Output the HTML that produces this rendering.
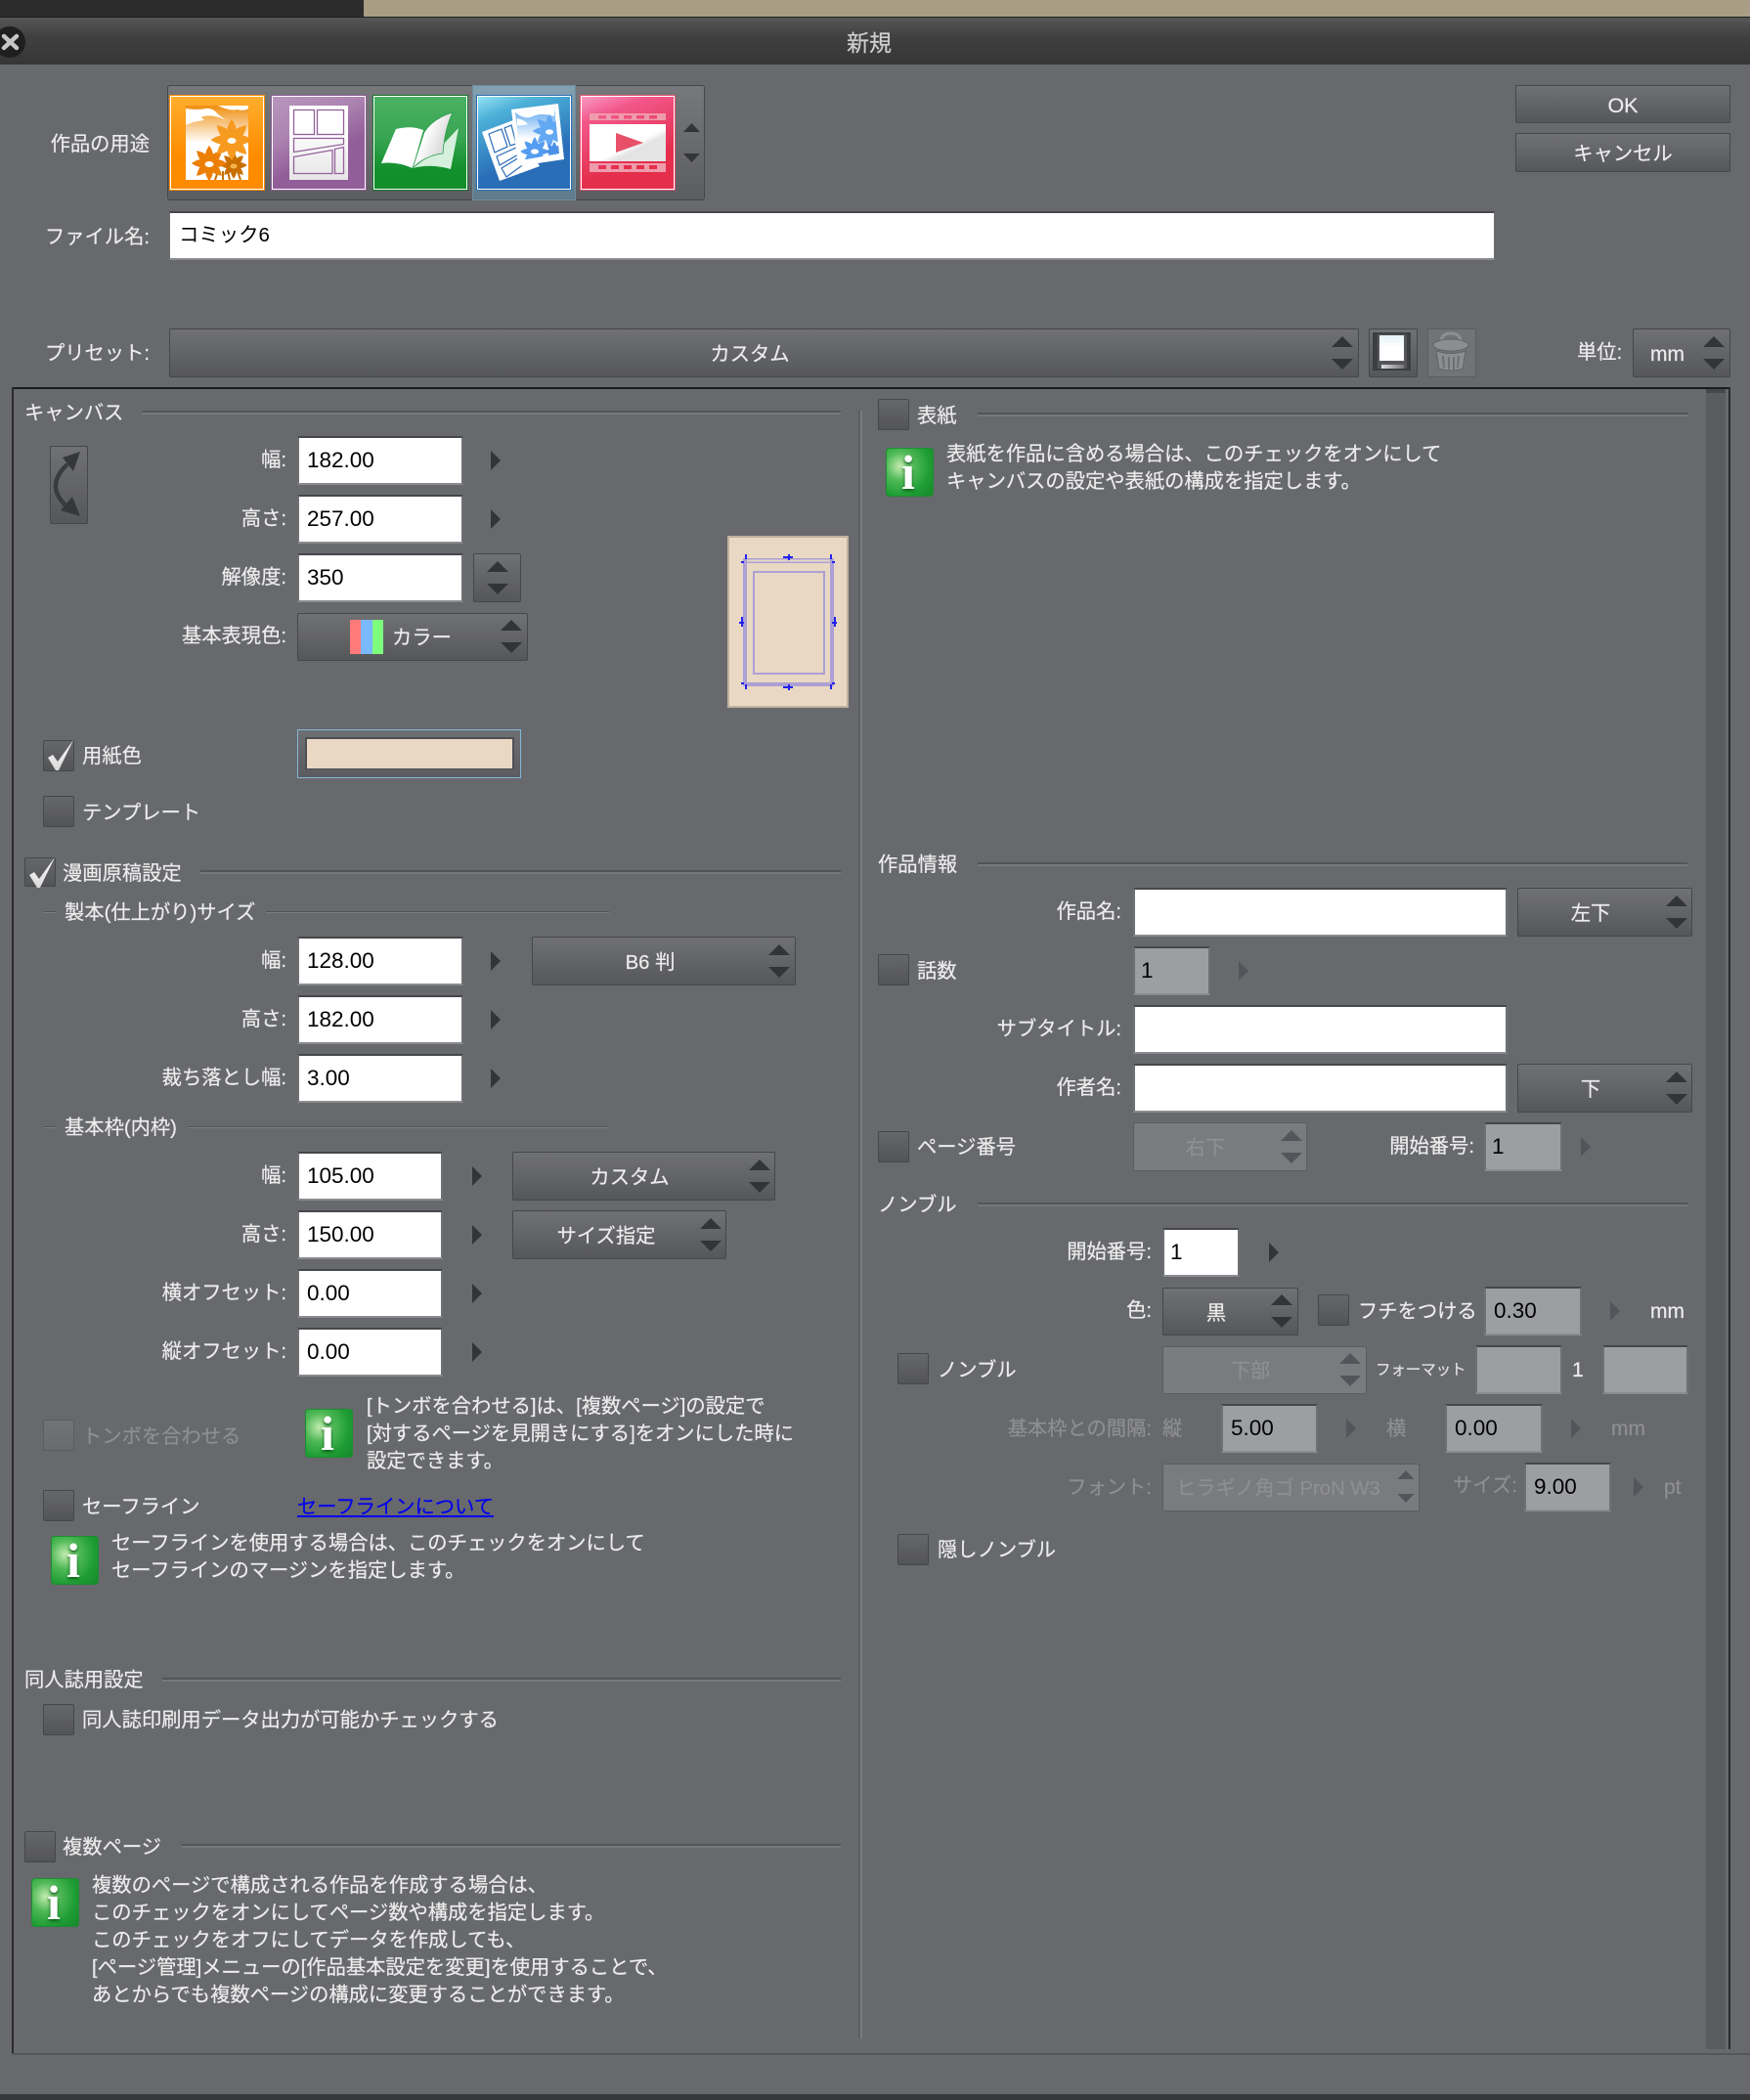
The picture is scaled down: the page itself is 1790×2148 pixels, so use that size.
<!DOCTYPE html>
<html lang="ja"><head><meta charset="utf-8"><title>新規</title>
<style>
html,body{margin:0;padding:0;width:1790px;height:2148px;overflow:hidden;background:#68696d}
body{position:relative;font-family:"Liberation Sans","Noto Sans CJK JP",sans-serif;color:#ececec}
div,svg,span,a{position:absolute}
.t{white-space:nowrap;font-size:20.3px;line-height:28px;height:28px;margin-top:1px;-webkit-text-stroke:.2px currentColor}
.c{transform:translateX(-50%)}
.d{color:#8e8f92}
.i{box-sizing:border-box;background:#fff;border-top:2px solid #46474a;border-bottom:2px solid #8b8c8f;border-left:2px solid #6f7074;border-right:2px solid #6f7074;color:#000;font-size:22.5px;line-height:45px;padding-left:8px;height:50px;white-space:nowrap}
.g{background:#9c9ea2}
.s{box-sizing:border-box;border:1px solid #46474a;border-radius:2px;background:linear-gradient(#707174,#56575a);height:50px}
.x{box-sizing:border-box;border:1px solid #5c5d60;border-radius:2px;background:#7a7b7e;height:50px}
.k{box-sizing:border-box;width:32px;height:32px;border:1px solid #46474a;border-radius:2px;background:linear-gradient(#66676a,#535457)}
.kd{border-color:#5c5d60;background:linear-gradient(#727376,#6a6b6e)}
.l{height:4px;background:linear-gradient(#535457 50%,#77787b 50%)}
.m{height:2px;background:linear-gradient(#515255 50%,#7e7f82 50%)}
.n{width:49px;height:50px;border-radius:4px;background:radial-gradient(circle at 30% 38%,#c4ecb0 0,#4fb957 32%,#1f9d35 65%,#158529 100%);box-shadow:inset 0 0 0 1px #1c8d30;overflow:hidden}
.n b{position:absolute;left:0;width:46px;text-align:center;top:0;font:bold 50px/50px "Liberation Serif",serif;color:#fff;text-shadow:0 2px 3px #0a5a15}
.e{fill:#333436}.ed{fill:#54555a}
</style></head><body>

<!-- window chrome -->
<div style="left:0;top:0;width:372px;height:17px;background:#2c2c2d"></div>
<div style="left:372px;top:0;width:1418px;height:17px;background:#a99d86"></div>
<div style="left:0;top:17px;width:1790px;height:49px;background:linear-gradient(#565656,#3f3f3f 45%,#363636);border-top:1px solid #202020;box-sizing:border-box"></div>
<svg style="left:0;top:24px" width="32" height="38" viewBox="0 0 32 38"><circle cx="10" cy="19" r="16" fill="#1f1f1f"/><path d="M4 13L17 25M17 13L4 25" stroke="#c6c6c6" stroke-width="4.500" stroke-linecap="round"/></svg>
<div class="t c" style="left:889px;top:29px;font-size:23px;color:#cfcfcf">新規</div>

<!-- usage tabs -->
<div style="left:171px;top:87px;width:550px;height:118px;box-sizing:border-box;border:1px solid #46474a;border-radius:3px;background:linear-gradient(#77787b,#5c5d60)"></div>
<div style="left:483px;top:87px;width:106px;height:118px;box-sizing:border-box;border:1px solid #6d8d9f;background:linear-gradient(#83a1b0,#5f7a8a)"></div>

<svg style="left:173px;top:97px" width="98" height="98" viewBox="0 0 98 98">
<defs><linearGradient id="o1" x1="0" y1="0" x2="0" y2="1"><stop offset="0" stop-color="#ffae2e"/><stop offset=".65" stop-color="#ff8c00"/></linearGradient>
<linearGradient id="o2" x1="0" y1="0" x2="0" y2="1"><stop offset="0" stop-color="#ef8f10"/><stop offset=".5" stop-color="#fff"/></linearGradient>
<clipPath id="oc"><rect x="17" y="11" width="64" height="76"/></clipPath>
<g id="fp"><path id="pt" d="M0-24Q7-14 5-6L0-3L-5-6Q-7-14 0-24Z"/><use href="#pt" transform="rotate(45)"/><use href="#pt" transform="rotate(90)"/><use href="#pt" transform="rotate(135)"/><use href="#pt" transform="rotate(180)"/><use href="#pt" transform="rotate(225)"/><use href="#pt" transform="rotate(270)"/><use href="#pt" transform="rotate(315)"/><circle r="8"/></g></defs>
<rect width="98" height="98" fill="#ff8c00"/><rect x="1.5" y="1.5" width="95" height="95" fill="url(#o1)" stroke="#fff"/>
<rect x="17" y="11" width="64" height="76" fill="url(#o2)"/>
<g clip-path="url(#oc)">
<path d="M17 14Q30 16 37 14Q45 13 50 20L58 26Q42 18 30 24L17 25Z" fill="#fff"/>
<path d="M17 22Q30 18 36 26Q25 27 17 31Z" fill="#fff"/>
<path d="M50 11Q62 17 70 15Q77 17 81 14V11Z" fill="#fff"/>
<path d="M47 87L50 78M55 87L55 78M73 87L70 78M62 87L60 78" stroke="#c96f00" stroke-width="2"/>
<use href="#fp" transform="translate(66,72) scale(.58)" fill="#c96f00"/>
<use href="#fp" transform="translate(41,70) scale(.76)" fill="#ec7f05"/>
<use href="#fp" transform="translate(64,46) scale(.9,.88)" fill="#f79a20"/>
<ellipse cx="64" cy="47" rx="4.500" ry="3" fill="#fff"/><ellipse cx="41" cy="71" rx="4.500" ry="3" fill="#fff"/><ellipse cx="66" cy="73" rx="3.500" ry="2.500" fill="#f5b44a"/>
</g></svg>

<svg style="left:277px;top:97px" width="98" height="98" viewBox="0 0 98 98">
<defs><linearGradient id="p1" x1=".1" y1="0" x2=".6" y2="1"><stop offset="0" stop-color="#b795bb"/><stop offset=".35" stop-color="#ad84b2"/><stop offset=".7" stop-color="#925e99"/></linearGradient>
<linearGradient id="p2" x1="0" y1="0" x2="0" y2="1"><stop offset=".3" stop-color="#fff"/><stop offset="1" stop-color="#e6e6e6"/></linearGradient></defs>
<rect width="98" height="98" fill="#8e5c96"/><rect x="1.5" y="1.5" width="95" height="95" fill="url(#p1)" stroke="#fff"/>
<rect x="19" y="11" width="60" height="76" fill="url(#p2)"/>
<g fill="none" stroke="#94619b" stroke-width="1.3"><rect x="23.5" y="15.5" width="21" height="25"/><rect x="47.5" y="15.5" width="27" height="25"/><path d="M23.5 44.5H74.5V50.5L23.5 58.5Z"/><path d="M23.5 63.5L63 56.5V80.5H23.5Z"/><path d="M65.5 55.5L74.5 53.5V80.5H65.5Z"/></g></svg>

<svg style="left:381px;top:97px" width="98" height="98" viewBox="0 0 98 98">
<defs><linearGradient id="g1" x1="0" y1="0" x2="0" y2="1"><stop offset="0" stop-color="#4ab264"/><stop offset=".45" stop-color="#38a552"/><stop offset=".8" stop-color="#108f2a"/></linearGradient>
<linearGradient id="g2" x1="0" y1="0" x2="1" y2=".6"><stop offset=".4" stop-color="#fff"/><stop offset=".8" stop-color="#dcdcdc"/></linearGradient></defs>
<rect width="98" height="98" fill="#11752c"/><rect x="1.5" y="1.5" width="95" height="95" fill="url(#g1)" stroke="#fff"/>
<path d="M88 34L80 76Q60 70 41 75L68 55Z" fill="#d6f0dd"/>
<path d="M9 70L24 35Q40 31 52 36L41 75Q25 68 9 70Z" fill="#fff"/>
<path d="M41 75L53 38Q62 24 82 18Q74 34 72 60Q54 62 41 75Z" fill="url(#g2)" stroke="#2c9c4c" stroke-width=".8"/></svg>

<svg style="left:487px;top:97px" width="98" height="98" viewBox="0 0 98 98">
<defs><linearGradient id="b1" x1=".1" y1="0" x2=".5" y2="1"><stop offset="0" stop-color="#8cdcf0"/><stop offset=".2" stop-color="#4cb0d8"/><stop offset=".75" stop-color="#2a6eb8"/></linearGradient>
<linearGradient id="b2" x1="0" y1="0" x2="0" y2="1"><stop offset="0" stop-color="#59a4ee"/><stop offset=".6" stop-color="#fff"/></linearGradient>
<clipPath id="bc"><path d="M40 18L80 13L85 60L46 67Z"/></clipPath></defs>
<rect width="98" height="98" fill="#2a6cb8"/><rect x="1.5" y="1.5" width="95" height="95" fill="url(#b1)" stroke="#fff"/>
<path d="M6 38L38 26L65 73L24 88Z" fill="#fff"/>
<path d="M13 40L26 35L32 53L19 59ZM29 34L36 31L41 50L35 52ZM21 63L41 54L45 60L24 72ZM26 75L46 63L50 70L31 84Z" fill="none" stroke="#2a6cb8" stroke-width="1.2"/>
<path d="M36 15L84 9L90 66L43 73Z" fill="#fff"/>
<path d="M40 18L80 13L85 60L46 67Z" fill="url(#b2)"/>
<g clip-path="url(#bc)">
<path d="M40 18Q50 26 58 22Q66 18 80 22V13H40ZM42 24Q50 26 53 30Q46 32 42 31Z" fill="#fff"/>
<use href="#fp" transform="translate(75,37) scale(.72)" fill="#63a8f2"/>
<use href="#fp" transform="translate(60,58) scale(.62)" fill="#559df0"/>
<use href="#fp" transform="translate(80,58) scale(.42)" fill="#4a90e6"/>
<ellipse cx="75" cy="38" rx="4" ry="2.600" fill="#fff"/><ellipse cx="60" cy="58" rx="4" ry="2.600" fill="#fff"/></g></svg>

<svg style="left:593px;top:97px" width="98" height="98" viewBox="0 0 98 98">
<defs><linearGradient id="r1" x1=".1" y1="0" x2=".5" y2="1"><stop offset="0" stop-color="#f893bf"/><stop offset=".22" stop-color="#f2578a"/><stop offset=".8" stop-color="#e42e4b"/></linearGradient>
<linearGradient id="r2" x1="0" y1="0" x2="1" y2="1"><stop offset=".55" stop-color="#fff"/><stop offset=".65" stop-color="#e4e4e4"/></linearGradient></defs>
<rect width="98" height="98" fill="#e7506e"/><rect x="1.5" y="1.5" width="95" height="95" fill="url(#r1)" stroke="#fff"/>
<path fill="#ee9bab" fill-rule="evenodd" d="M10 19H88V26H10ZM19 21V24.500H27V21ZM32 21V24.500H40V21ZM45 21V24.500H53V21ZM58 21V24.500H66V21ZM71 21V24.500H79V21ZM10 70H88V79H10ZM19 72V76H27V72ZM32 72V76H40V72ZM45 72V76H53V72ZM58 72V76H66V72ZM71 72V76H79V72Z"/>
<rect x="10" y="30" width="78" height="38" fill="url(#r2)"/><path d="M37 39L65 49L37 59Z" fill="#e8506a"/></svg>

<!-- buttons top right -->
<div class="s" style="left:1550px;top:87px;width:220px;height:39px"></div><div class="t c" style="left:1660px;top:93px;font-size:21.5px">OK</div>
<div class="s" style="left:1550px;top:136px;width:220px;height:40px"></div><div class="t c" style="left:1660px;top:143px">キャンセル</div>

<div class="t" style="right:1637px;top:133px">作品の用途</div>
<div class="t" style="right:1637px;top:228px">ファイル名:</div>
<div class="i" style="left:173px;top:216px;width:1356px;line-height:46px;font-size:20.4px;padding-left:9px;border-left-width:1px;border-right-width:1px">コミック6</div>

<!-- preset row -->
<div class="t" style="right:1637px;top:347px">プリセット:</div>
<div class="s" style="left:173px;top:336px;width:1217px"></div>
<div class="t c" style="left:767px;top:348px">カスタム</div>
<div class="s" style="left:1400px;top:336px;width:50px"></div>
<svg style="left:1400px;top:336px" width="50" height="50" viewBox="0 0 50 50">
<defs><linearGradient id="w1" x1="0" y1="0" x2="0" y2="1"><stop offset="0" stop-color="#e4f2f6"/><stop offset=".5" stop-color="#fff"/></linearGradient><linearGradient id="w2" x1="0" y1="0" x2="1" y2="0"><stop offset="0" stop-color="#ddd"/><stop offset="1" stop-color="#777"/></linearGradient></defs>
<rect x="4" y="4" width="39" height="39" fill="#3d3e40"/><rect x="9" y="6" width="30" height="35" fill="#55565a"/><rect x="11" y="7" width="25" height="26" fill="url(#w1)"/><rect x="13" y="37" width="23" height="4" fill="url(#w2)"/></svg>
<div class="s" style="left:1460px;top:336px;width:50px;background:#727376;border-color:#5c5d60"></div>
<svg style="left:1460px;top:336px" width="50" height="50" viewBox="0 0 50 50"><g fill="#8d8e90" stroke="#636467" stroke-width="1"><path d="M14 14Q14 5 24 5Q34 5 34 14" fill="none" stroke="#8d8e90" stroke-width="3"/><ellipse cx="24" cy="17" rx="18" ry="6"/><path d="M9 23Q24 28 39 23L36 41Q24 45 12 41Z"/></g><path d="M16 28L17 40M22 29V42M27 29V42M32 28L31 40" stroke="#6e6f72" stroke-width="2"/></svg>
<div class="t" style="left:1613px;top:346px">単位:</div>
<div class="s" style="left:1670px;top:336px;width:100px"></div>
<div class="t" style="left:1688px;top:348px;font-size:21px">mm</div>

<!-- main panel frame -->
<div style="left:12px;top:396px;width:1758px;height:2px;background:#1c1c1e"></div>
<div style="left:12px;top:396px;width:2px;height:1705px;background:#2a2a2d"></div>
<div style="left:1768px;top:396px;width:2px;height:1700px;background:#2a2a2d"></div>
<div style="left:12px;top:2100px;width:1778px;height:2px;background:#55565a"></div>
<div style="left:1745px;top:398px;width:20px;height:1698px;background:#5b5c5f"></div>
<div style="left:1745px;top:398px;width:20px;height:4px;background:#47484b"></div>
<div style="left:878px;top:420px;width:2px;height:1665px;background:#5d5e61"></div>
<div style="left:880px;top:420px;width:2px;height:1665px;background:#7a7b7e"></div>
<div style="left:0;top:2142px;width:1790px;height:6px;background:#37383a"></div>

<!-- canvas -->
<div class="t" style="left:25px;top:408px">キャンバス</div><div class="l" style="left:146px;top:420px;width:714px"></div>
<div class="s" style="left:51px;top:456px;width:39px;height:80px"></div>
<svg style="left:51px;top:456px" width="39" height="80" viewBox="0 0 39 80"><path d="M18 19Q-5 40 16 61" fill="none" stroke="#3a3b3d" stroke-width="4.500"/><path d="M31 6L13 12L24 26Z" fill="#36373a"/><path d="M31 72L11 66L23 52Z" fill="#36373a"/></svg>
<div class="t" style="right:1497px;top:456px">幅:</div><div class="i" style="left:304px;top:446px;width:170px">182.00</div>
<div class="t" style="right:1497px;top:516px">高さ:</div><div class="i" style="left:304px;top:506px;width:170px">257.00</div>
<div class="t" style="right:1497px;top:576px">解像度:</div><div class="i" style="left:304px;top:566px;width:170px">350</div>
<div class="s" style="left:484px;top:566px;width:49px"></div>
<div class="t" style="right:1497px;top:636px">基本表現色:</div>
<div class="s" style="left:304px;top:627px;width:236px;height:49px"></div>
<div style="left:358px;top:634px;width:11px;height:35px;background:#ff7a7a"></div><div style="left:369px;top:634px;width:12px;height:35px;background:#7ab8ff"></div><div style="left:381px;top:634px;width:11px;height:35px;background:#7dff7d"></div>
<div class="t" style="left:401px;top:638px">カラー</div>

<svg style="left:744px;top:548px" width="124" height="176" viewBox="744 548 124 176">
<rect x="745" y="549" width="122" height="174" fill="#e8d8c4" stroke="#bfb2a2" stroke-width="2"/>
<g fill="#aca0d4"><rect x="760" y="571" width="93" height="1.5"/><rect x="760" y="574.5" width="93" height="1.5"/><rect x="760" y="571" width="4" height="131"/><rect x="849" y="571" width="4" height="131"/><rect x="760" y="698" width="93" height="4"/></g>
<rect x="771" y="585" width="72" height="104" fill="none" stroke="#aca0d4" stroke-width="2"/>
<path fill="#2222ee" d="M762 567h2v5h-2zM849 567h2v5h-2zM801 569h10v2h-10zM806 567h2v6h-2zM758 574h3v2h-3zM851 574h3v2h-3zM758 698h3v2h-3zM851 698h3v2h-3zM762 700h2v5h-2zM849 700h2v5h-2zM801 702h10v2h-10zM806 700h2v6h-2zM758 631h2v10h-2zM756 636h5v2h-5zM853 631h2v10h-2zM851 636h5v2h-5z"/></svg>

<div class="k" style="left:44px;top:757px"></div><div class="t" style="left:84px;top:759px">用紙色</div>
<div style="left:304px;top:746px;width:229px;height:50px;box-sizing:border-box;border:1px solid #7fb9da;background:linear-gradient(#6e6f72,#5b5c5f)"></div>
<div style="left:312px;top:754px;width:214px;height:33px;background:#4e4f52"></div>
<div style="left:314px;top:756px;width:210px;height:30px;background:#e8d8c4"></div>
<div class="k" style="left:44px;top:814px"></div><div class="t" style="left:84px;top:817px">テンプレート</div>

<!-- manga -->
<div class="k" style="left:25px;top:877px;height:30px"></div><div class="t" style="left:64px;top:879px">漫画原稿設定</div><div class="l" style="left:205px;top:890px;width:655px"></div>
<div class="m" style="left:45px;top:932px;width:13px"></div><div class="t" style="left:66px;top:919px">製本(仕上がり)サイズ</div><div class="m" style="left:272px;top:932px;width:351px"></div>
<div class="t" style="right:1497px;top:968px">幅:</div><div class="i" style="left:304px;top:958px;width:170px">128.00</div>
<div class="s" style="left:544px;top:958px;width:270px"></div><div class="t c" style="left:665px;top:970px">B6 判</div>
<div class="t" style="right:1497px;top:1028px">高さ:</div><div class="i" style="left:304px;top:1018px;width:170px">182.00</div>
<div class="t" style="right:1497px;top:1088px">裁ち落とし幅:</div><div class="i" style="left:304px;top:1078px;width:170px">3.00</div>
<div class="m" style="left:45px;top:1152px;width:13px"></div><div class="t" style="left:66px;top:1139px">基本枠(内枠)</div><div class="m" style="left:192px;top:1152px;width:431px"></div>
<div class="t" style="right:1497px;top:1188px">幅:</div><div class="i" style="left:304px;top:1178px;width:149px">105.00</div>
<div class="s" style="left:524px;top:1178px;width:269px"></div><div class="t c" style="left:644px;top:1190px">カスタム</div>
<div class="t" style="right:1497px;top:1248px">高さ:</div><div class="i" style="left:304px;top:1238px;width:149px">150.00</div>
<div class="s" style="left:524px;top:1238px;width:219px"></div><div class="t c" style="left:620px;top:1250px">サイズ指定</div>
<div class="t" style="right:1497px;top:1308px">横オフセット:</div><div class="i" style="left:304px;top:1298px;width:149px">0.00</div>
<div class="t" style="right:1497px;top:1368px">縦オフセット:</div><div class="i" style="left:304px;top:1358px;width:149px">0.00</div>

<div class="k kd" style="left:44px;top:1452px"></div><div class="t d" style="left:84px;top:1455px">トンボを合わせる</div>
<div class="n" style="left:312px;top:1441px"><b>i</b></div>
<div class="t" style="left:375px;top:1424px">[トンボを合わせる]は、[複数ページ]の設定で</div>
<div class="t" style="left:375px;top:1452px">[対するページを見開きにする]をオンにした時に</div>
<div class="t" style="left:375px;top:1480px">設定できます。</div>

<div class="k" style="left:44px;top:1524px"></div><div class="t" style="left:84px;top:1527px">セーフライン</div>
<div class="t" style="left:304px;top:1527px;color:#0000ee;text-decoration:underline">セーフラインについて</div>
<div class="n" style="left:52px;top:1571px"><b>i</b></div>
<div class="t" style="left:114px;top:1564px">セーフラインを使用する場合は、このチェックをオンにして</div>
<div class="t" style="left:114px;top:1592px">セーフラインのマージンを指定します。</div>

<div class="t" style="left:25px;top:1704px">同人誌用設定</div><div class="l" style="left:166px;top:1716px;width:694px"></div>
<div class="k" style="left:44px;top:1743px"></div><div class="t" style="left:84px;top:1745px">同人誌印刷用データ出力が可能かチェックする</div>

<div class="k" style="left:25px;top:1873px"></div><div class="t" style="left:64px;top:1875px">複数ページ</div><div class="l" style="left:186px;top:1886px;width:674px"></div>
<div class="n" style="left:32px;top:1921px"><b>i</b></div>
<div class="t" style="left:94px;top:1914px">複数のページで構成される作品を作成する場合は、</div>
<div class="t" style="left:94px;top:1942px">このチェックをオンにしてページ数や構成を指定します。</div>
<div class="t" style="left:94px;top:1970px">このチェックをオフにしてデータを作成しても、</div>
<div class="t" style="left:94px;top:1998px">[ページ管理]メニューの[作品基本設定を変更]を使用することで、</div>
<div class="t" style="left:94px;top:2026px">あとからでも複数ページの構成に変更することができます。</div>

<!-- right column -->
<div class="k" style="left:898px;top:408px"></div><div class="t" style="left:938px;top:411px">表紙</div><div class="l" style="left:1000px;top:422px;width:726px"></div>
<div class="n" style="left:906px;top:458px"><b>i</b></div>
<div class="t" style="left:968px;top:450px">表紙を作品に含める場合は、このチェックをオンにして</div>
<div class="t" style="left:968px;top:478px">キャンバスの設定や表紙の構成を指定します。</div>

<div class="t" style="left:898px;top:870px">作品情報</div><div class="l" style="left:1000px;top:882px;width:726px"></div>
<div class="t" style="right:643px;top:918px">作品名:</div><div class="i" style="left:1159px;top:908px;width:383px"></div>
<div class="s" style="left:1552px;top:908px;width:179px"></div><div class="t c" style="left:1627px;top:920px">左下</div>
<div class="k" style="left:898px;top:976px"></div><div class="t" style="left:938px;top:979px">話数</div>
<div class="i g" style="left:1159px;top:968px;width:79px;padding-left:6px">1</div>
<div class="t" style="right:643px;top:1038px">サブタイトル:</div><div class="i" style="left:1159px;top:1028px;width:383px"></div>
<div class="t" style="right:643px;top:1098px">作者名:</div><div class="i" style="left:1159px;top:1088px;width:383px"></div>
<div class="s" style="left:1552px;top:1088px;width:179px"></div><div class="t c" style="left:1627px;top:1100px">下</div>
<div class="k" style="left:898px;top:1157px"></div><div class="t" style="left:938px;top:1159px">ページ番号</div>
<div class="x" style="left:1159px;top:1148px;width:178px"></div><div class="t c d" style="left:1233px;top:1160px">右下</div>
<div class="t" style="right:282px;top:1158px">開始番号:</div><div class="i g" style="left:1518px;top:1148px;width:80px;padding-left:6px">1</div>

<div class="t" style="left:898px;top:1218px">ノンブル</div><div class="l" style="left:1000px;top:1230px;width:726px"></div>
<div class="t" style="right:612px;top:1266px">開始番号:</div><div class="i" style="left:1189px;top:1256px;width:79px;padding-left:6px">1</div>
<div class="t" style="right:612px;top:1326px">色:</div>
<div class="s" style="left:1189px;top:1317px;width:139px;height:49px"></div><div class="t c" style="left:1244px;top:1329px">黒</div>
<div class="k" style="left:1348px;top:1324px"></div><div class="t" style="left:1389px;top:1327px">フチをつける</div>
<div class="i g" style="left:1518px;top:1316px;width:100px">0.30</div>
<div class="t" style="left:1688px;top:1327px;font-size:21px">mm</div>
<div class="k" style="left:918px;top:1384px"></div><div class="t" style="left:959px;top:1387px">ノンブル</div>
<div class="x" style="left:1189px;top:1377px;width:209px;height:49px"></div><div class="t c d" style="left:1279px;top:1388px">下部</div>
<div class="t" style="left:1407px;top:1387px;font-size:15.5px;letter-spacing:-.1px;color:#e0e0e0">フォーマット</div>
<div class="i g" style="left:1509px;top:1376px;width:89px"></div>
<div class="t" style="left:1608px;top:1387px;font-size:21px">1</div>
<div class="i g" style="left:1639px;top:1376px;width:88px"></div>

<div class="t d" style="right:612px;top:1447px">基本枠との間隔:</div><div class="t d" style="left:1189px;top:1447px">縦</div>
<div class="i g" style="left:1249px;top:1436px;width:99px">5.00</div>
<div class="t d" style="left:1418px;top:1447px">横</div>
<div class="i g" style="left:1478px;top:1436px;width:100px">0.00</div>
<div class="t d" style="left:1648px;top:1447px;font-size:21px">mm</div>
<div class="t d" style="right:612px;top:1507px">フォント:</div>
<div class="x" style="left:1189px;top:1497px;width:263px;height:49px"></div>
<div class="t d" style="left:1203px;top:1508px">ヒラギノ角ゴ ProN W3</div>
<div class="t d" style="left:1486px;top:1505px">サイズ:</div>
<div class="i g" style="left:1559px;top:1496px;width:89px">9.00</div>
<div class="t d" style="left:1702px;top:1507px;font-size:21px">pt</div>
<div class="k" style="left:918px;top:1569px"></div><div class="t" style="left:959px;top:1571px">隠しノンブル</div>

<!-- arrows and check marks -->
<svg style="left:0;top:0" width="1790" height="2148" viewBox="0 0 1790 2148">
<defs><path id="a" d="M-11-6L0-17L11-6ZM-11 6L0 17L11 6Z"/><path id="r" d="M0-10L10 0L0 10Z"/>
<linearGradient id="ck" x1="0" y1="0" x2="0" y2="1"><stop offset="0" stop-color="#fff"/><stop offset="1" stop-color="#d8d8d8"/></linearGradient></defs>
<path class="e" d="M699 135L707.500 126L716 135ZM699 157L707.500 166L716 157Z"/>
<g class="e">
<use href="#a" x="1373" y="361"/><use href="#a" x="1753" y="361"/><use href="#a" x="509" y="591"/><use href="#a" x="523" y="651"/>
<use href="#a" x="797" y="983"/><use href="#a" x="777" y="1203"/><use href="#a" x="727" y="1263"/>
<use href="#a" x="1715" y="933"/><use href="#a" x="1715" y="1113"/><use href="#a" x="1311" y="1341"/>
<use href="#r" x="502" y="471"/><use href="#r" x="502" y="531"/><use href="#r" x="502" y="983"/><use href="#r" x="502" y="1043"/><use href="#r" x="502" y="1103"/>
<use href="#r" x="483" y="1203"/><use href="#r" x="483" y="1263"/><use href="#r" x="483" y="1323"/><use href="#r" x="483" y="1383"/>
<use href="#r" x="1298" y="1281"/></g>
<g class="ed">
<use href="#a" x="1321" y="1173"/><use href="#a" x="1381" y="1401"/>
<path d="M1429.500 1513L1438 1504L1446.500 1513ZM1429.500 1528L1438 1537L1446.500 1528Z"/>
<use href="#r" x="1267" y="993"/><use href="#r" x="1617" y="1173"/><use href="#r" x="1647" y="1341"/><use href="#r" x="1377" y="1461"/><use href="#r" x="1607" y="1461"/><use href="#r" x="1671" y="1521"/></g>
<path d="M49 775L54 772L59 779L75 757L60 788H57Z" fill="url(#ck)"/>
<path d="M30 895L35 892L40 899L56 877L41 908H38Z" fill="url(#ck)"/>
</svg>
</body></html>
